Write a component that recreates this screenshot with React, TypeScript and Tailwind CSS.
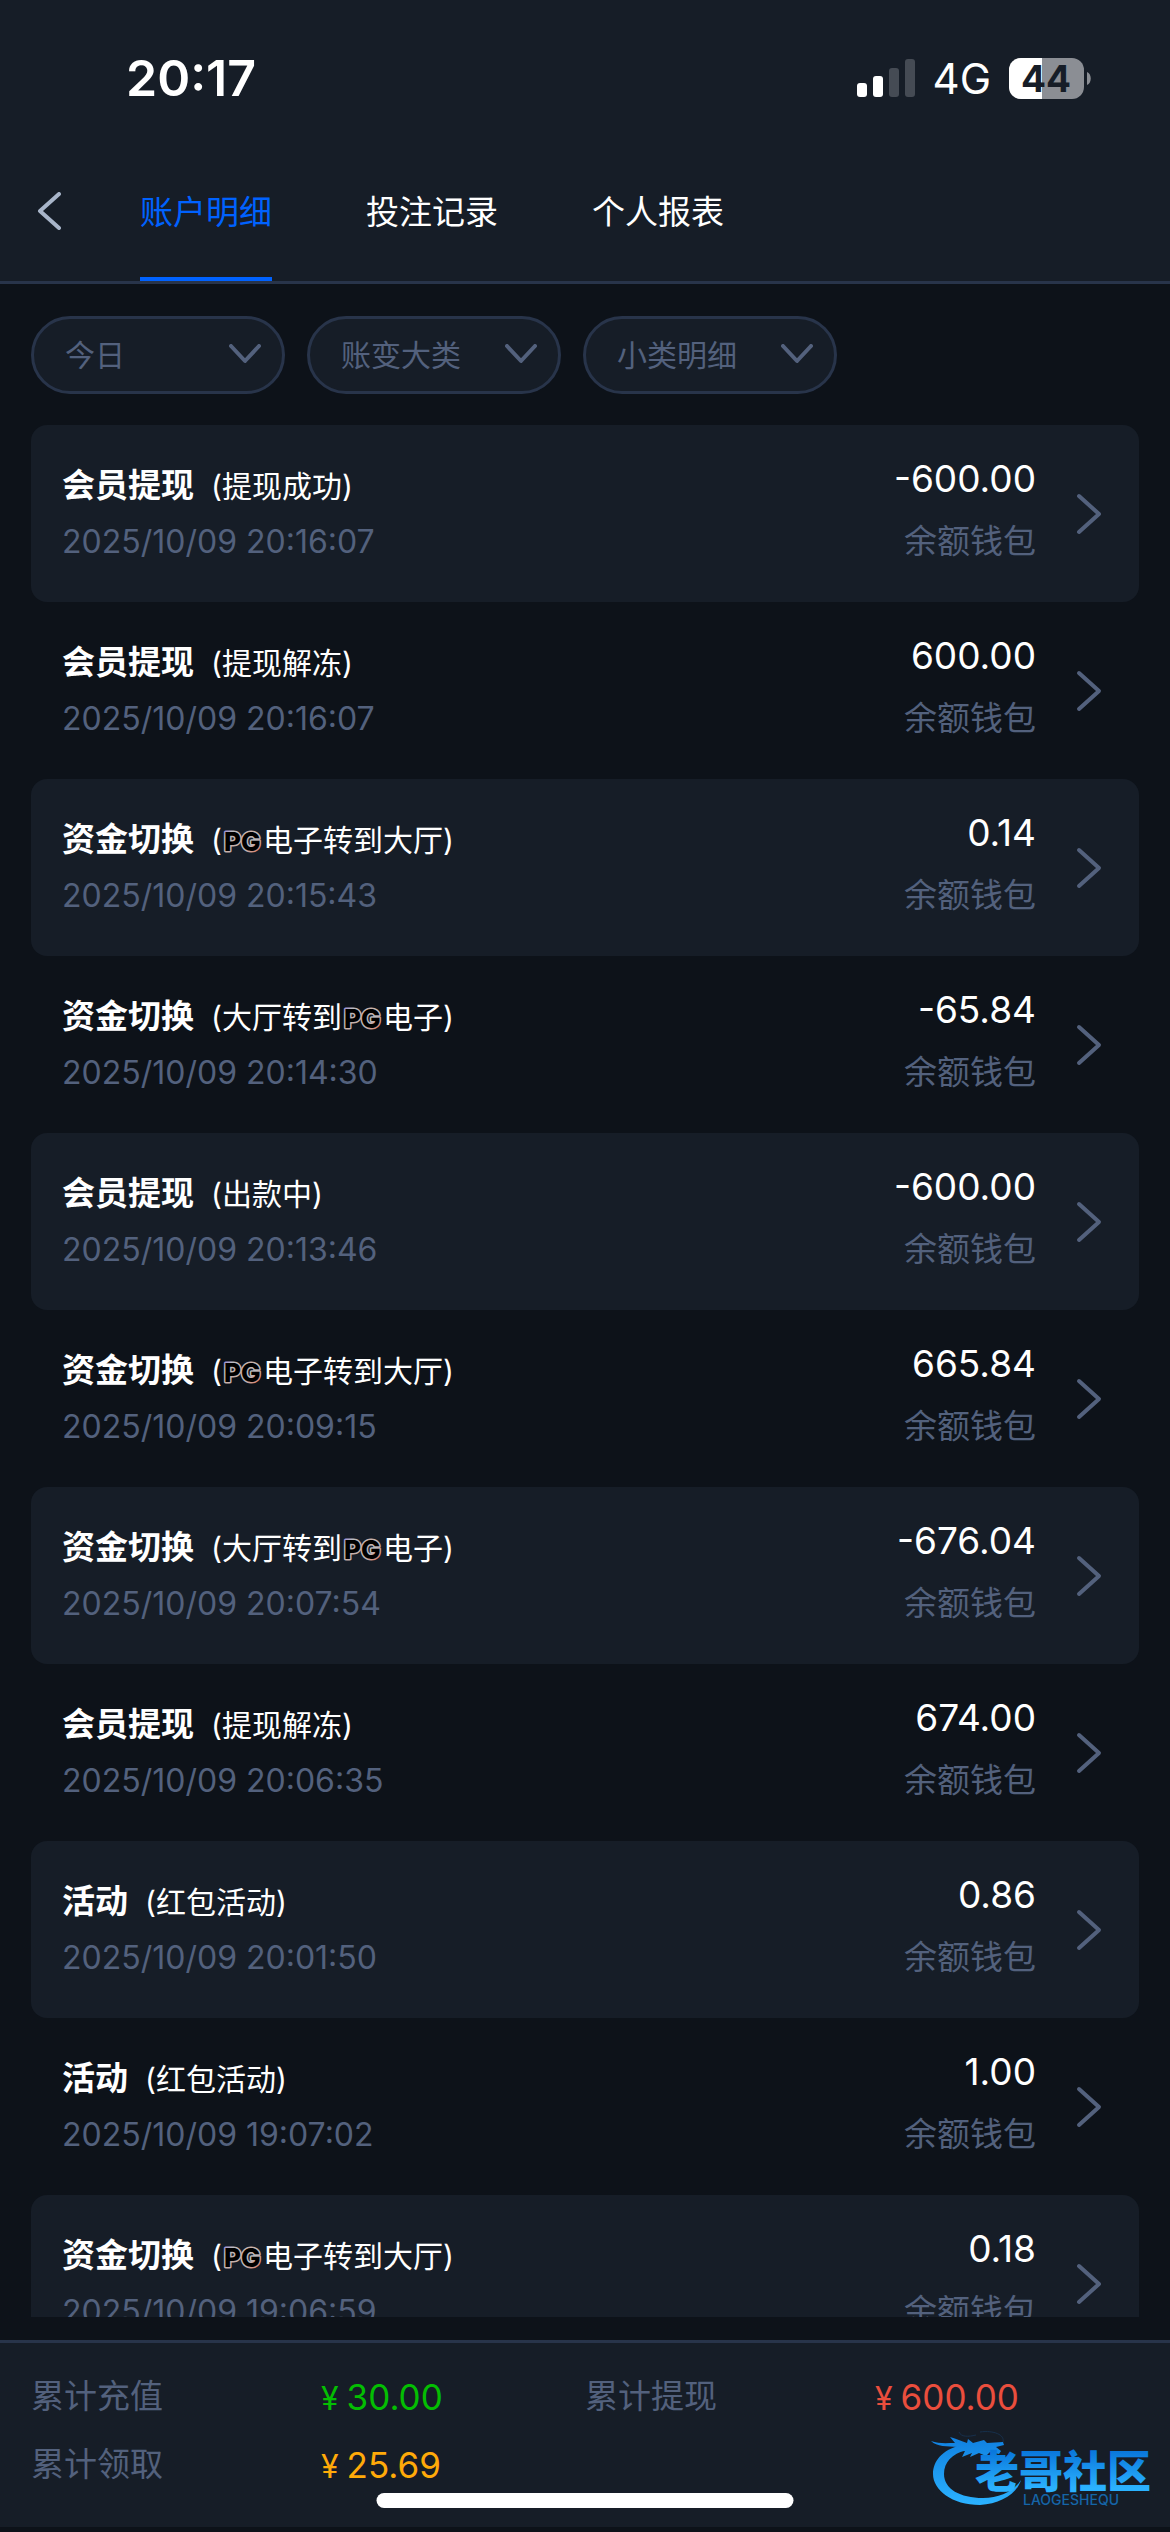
import { useState } from 'react';

// ============================================================================
// TYPES
// ============================================================================

interface LedgerRecord {
  title: string;
  note: string;
  time: string;
  amount: string;
}

interface FilterOption {
  id: string;
  label: string;
}

interface Total {
  label: string;
  amount: string;
  color: string;
}

// ============================================================================
// DATA
// ============================================================================

const tabs = ['账户明细', '投注记录', '个人报表'];

const filters: FilterOption[] = [
  { id: 'date', label: '今日' },
  { id: 'category', label: '账变大类' },
  { id: 'detail', label: '小类明细' },
];

// "PG" inside a note is rendered as the provider badge
const records: LedgerRecord[] = [
  { title: '会员提现', note: '(提现成功)', time: '2025/10/09 20:16:07', amount: '-600.00' },
  { title: '会员提现', note: '(提现解冻)', time: '2025/10/09 20:16:07', amount: '600.00' },
  { title: '资金切换', note: '(PG电子转到大厅)', time: '2025/10/09 20:15:43', amount: '0.14' },
  { title: '资金切换', note: '(大厅转到PG电子)', time: '2025/10/09 20:14:30', amount: '-65.84' },
  { title: '会员提现', note: '(出款中)', time: '2025/10/09 20:13:46', amount: '-600.00' },
  { title: '资金切换', note: '(PG电子转到大厅)', time: '2025/10/09 20:09:15', amount: '665.84' },
  { title: '资金切换', note: '(大厅转到PG电子)', time: '2025/10/09 20:07:54', amount: '-676.04' },
  { title: '会员提现', note: '(提现解冻)', time: '2025/10/09 20:06:35', amount: '674.00' },
  { title: '活动', note: '(红包活动)', time: '2025/10/09 20:01:50', amount: '0.86' },
  { title: '活动', note: '(红包活动)', time: '2025/10/09 19:07:02', amount: '1.00' },
  { title: '资金切换', note: '(PG电子转到大厅)', time: '2025/10/09 19:06:59', amount: '0.18' },
];

const totals: Total[] = [
  { label: '累计充值', amount: '30.00', color: 'text-[#04be02]' },
  { label: '累计提现', amount: '600.00', color: 'text-[#ea4e3d]' },
  { label: '累计领取', amount: '25.69', color: 'text-[#ffaa09]' },
];

// ============================================================================
// ICONS
// ============================================================================

function SignalIcon() {
  return (
    <svg width="58" height="38" viewBox="0 0 58 38" aria-hidden="true">
      <rect x="0" y="24" width="10" height="14" rx="3" fill="#fff" />
      <rect x="16" y="17" width="10" height="21" rx="3" fill="#fff" />
      <rect x="32" y="9" width="10" height="29" rx="3" fill="#454b54" />
      <rect x="48" y="0" width="10" height="38" rx="3" fill="#454b54" />
    </svg>
  );
}

function BatteryIcon() {
  return (
    <svg width="82" height="41" viewBox="0 0 82 41" className="overflow-visible" aria-hidden="true">
      <rect width="75" height="41" rx="12" fill="#8b8e94" />
      <path d="M12 0H33V41H12A12 12 0 0 1 0 29V12A12 12 0 0 1 12 0Z" fill="#fff" />
      <path d="M78 14C83 16 83 25 78 27Z" fill="#8b8e94" />
      <text
        x="37"
        y="34"
        textAnchor="middle"
        fontSize="37"
        fontWeight="700"
        fill="#161d27"
        className="font-['Inter']"
      >
        44
      </text>
    </svg>
  );
}

function BackIcon() {
  return (
    <svg width="24" height="38" viewBox="0 0 24 38" fill="none" aria-hidden="true">
      <path d="M22 2L3 19L22 36" stroke="#a8b5c9" strokeWidth="4" strokeLinecap="round" strokeLinejoin="round" />
    </svg>
  );
}

function DownIcon() {
  return (
    <svg
      width="32"
      height="20"
      viewBox="0 0 32 20"
      fill="none"
      aria-hidden="true"
      className="pointer-events-none absolute top-7 right-6"
    >
      <path d="M2 2L16 17L30 2" stroke="#53617d" strokeWidth="4" strokeLinecap="round" strokeLinejoin="round" />
    </svg>
  );
}

function RightIcon() {
  return (
    <svg width="26" height="42" viewBox="0 0 26 42" fill="none" aria-hidden="true">
      <path d="M3 3L23 21L3 39" stroke="#53617d" strokeWidth="4" strokeLinecap="round" strokeLinejoin="round" />
    </svg>
  );
}

function ProviderBadge() {
  return (
    <svg width="41" height="22" viewBox="0 0 41 22" className="mt-1 shrink-0 overflow-visible">
      <defs>
        <linearGradient id="pg" x1="0" y1="0" x2="1" y2="1">
          <stop offset="0" stopColor="#8a6ce0" />
          <stop offset="0.2" stopColor="#b9bbc0" />
          <stop offset="0.45" stopColor="#c9b0a8" />
          <stop offset="0.65" stopColor="#b9bbc0" />
          <stop offset="1" stopColor="#f0643c" />
        </linearGradient>
      </defs>
      <text
        x="2"
        y="20"
        fontSize="26"
        fontWeight="800"
        fill="#000"
        stroke="url(#pg)"
        strokeWidth="3"
        strokeLinejoin="round"
        paintOrder="stroke"
        className="font-['Inter']"
      >
        PG
      </text>
    </svg>
  );
}

function CommunityLogo() {
  return (
    <svg
      width="224"
      height="80"
      viewBox="0 0 224 80"
      className="pointer-events-none absolute right-4 bottom-6 overflow-visible"
    >
      <defs>
        <linearGradient id="logo" gradientUnits="userSpaceOnUse" x1="0" y1="8" x2="0" y2="76">
          <stop offset="0" stopColor="#0f7fe0" />
          <stop offset="1" stopColor="#2bb2ff" />
        </linearGradient>
        <linearGradient id="word" gradientUnits="userSpaceOnUse" x1="0" y1="24" x2="0" y2="60">
          <stop offset="0" stopColor="#0a78dc" />
          <stop offset="1" stopColor="#2bb2ff" />
        </linearGradient>
      </defs>
      {/* dragon body */}
      <path
        d="M31 17C12 22 3 33 3 46C3 62 22 77 50 77C70 76 87 66 91 52C84 63 70 70 53 70C30 70 14 61 14 46C14 34 22 26 36 22Z"
        fill="url(#logo)"
      />
      {/* head, horns and whiskers */}
      <path
        d="M1 13C9 16 17 15 25 15L20 9C27 11 31 13 37 15L38 11L43 15L54 12L57 15L73 14L74 17L66 19L71 23L69 26L60 24L56 28L49 25L40 29L42 25L32 29L35 23L23 24L28 19C17 18 7 19 1 13Z"
        fill="url(#logo)"
      />
      <path d="M29 4C31 9 38 9 46 7M50 4C64 2 75 7 73 14" fill="none" stroke="#17304c" strokeWidth="1" />
      <text
        x="45"
        y="60"
        fontSize="44"
        fontWeight="900"
        fill="url(#word)"
        className="font-['Noto_Sans_CJK_SC',sans-serif]"
      >
        老哥社区
      </text>
      <text x="93" y="77" fontSize="14" fontWeight="500" fill="#1565a8" className="font-['Inter']">
        LAOGESHEQU
      </text>
    </svg>
  );
}

// ============================================================================
// COMPONENTS
// ============================================================================

function StatusBar() {
  return (
    <div className="flex h-[156px] items-center justify-between pr-[79px] pl-[126px] text-white">
      <span className="text-[50px] font-semibold">20:17</span>
      <div className="flex items-center gap-[18px]">
        <SignalIcon />
        <span className="text-[42px]">4G</span>
        <BatteryIcon />
      </div>
    </div>
  );
}

function Note({ text }: { text: string }) {
  const [before, after] = text.split('PG');

  return (
    <span className="flex items-center text-[30px]">
      {before}
      {after !== undefined && <ProviderBadge />}
      {after}
    </span>
  );
}

function RecordRow({ record }: { record: LedgerRecord }) {
  return (
    <li className="rounded-2xl odd:bg-[#161d27]">
      <button type="button" className="flex h-[177px] w-full items-start justify-between pr-[37px] pl-[31px] text-left">
        <div className="pt-[37px]">
          <div className="flex h-12 items-center gap-[17px] text-white">
            <span className="text-[33px] font-bold">{record.title}</span>
            <Note text={record.note} />
          </div>
          <p className="mt-2 text-[32px] leading-[48px] text-[#53617d]">{record.time}</p>
        </div>
        <div className="flex h-full items-center gap-10">
          <div className="pb-[7px] text-right">
            <p className="text-[37px] leading-[48px] text-white">{record.amount}</p>
            <p className="mt-[14px] text-[33px] leading-[48px] text-[#53617d]">余额钱包</p>
          </div>
          <RightIcon />
        </div>
      </button>
    </li>
  );
}

export default function App() {
  const [activeTab, setActiveTab] = useState(tabs[0]);

  return (
    <div className="relative flex h-screen flex-col bg-[#0d1219] pb-[5px] font-['Inter','Noto_Sans_CJK_SC',sans-serif]">
      <header className="shrink-0 border-b-3 border-[#28344a] bg-[#161d27]">
        <StatusBar />
        <nav className="flex h-[125px] items-stretch">
          <button type="button" aria-label="返回" className="mb-4 flex w-[140px] items-center pl-[37px]">
            <BackIcon />
          </button>
          <div className="flex gap-[94px]">
            {tabs.map((tab) => (
              <button
                key={tab}
                type="button"
                onClick={() => setActiveTab(tab)}
                className={
                  tab === activeTab
                    ? 'border-b-4 border-[#0062ff] pb-2 text-[33px] text-[#0062ff]'
                    : 'border-b-4 border-transparent pb-2 text-[33px] text-white'
                }
              >
                {tab}
              </button>
            ))}
          </div>
        </nav>
      </header>

      <div className="flex shrink-0 gap-[22px] px-[31px] pt-8 pb-[31px]">
        {filters.map((filter) => (
          <div key={filter.id} className="relative">
            <select
              aria-label={filter.label}
              className="h-[78px] w-[254px] appearance-none rounded-full border-3 border-[#28344a] bg-[#161d27] pl-[31px] text-[30px] text-[#53617d]"
            >
              <option>{filter.label}</option>
            </select>
            <DownIcon />
          </div>
        ))}
      </div>

      <ul className="mb-[23px] min-h-0 flex-1 overflow-hidden px-[31px]">
        {records.map((record, index) => (
          <RecordRow key={index} record={record} />
        ))}
      </ul>

      <footer className="h-[187px] shrink-0 border-t-3 border-[#28344a] bg-[#161d27] px-[31px] pt-5 text-[33px]">
        <dl className="grid grid-cols-2">
          {totals.map((total) => (
            <div key={total.label} className="flex h-[68px] items-center">
              <dt className="w-[290px] text-[#53617d]">{total.label}</dt>
              <dd className={total.color}>
                <span className="mr-2 text-[32px]">¥</span>
                <span className="text-[35px]">{total.amount}</span>
              </dd>
            </div>
          ))}
        </dl>
      </footer>

      <div className="absolute bottom-6 left-1/2 h-[15px] w-[417px] -translate-x-1/2 rounded-full bg-white" />
      <CommunityLogo />
    </div>
  );
}
